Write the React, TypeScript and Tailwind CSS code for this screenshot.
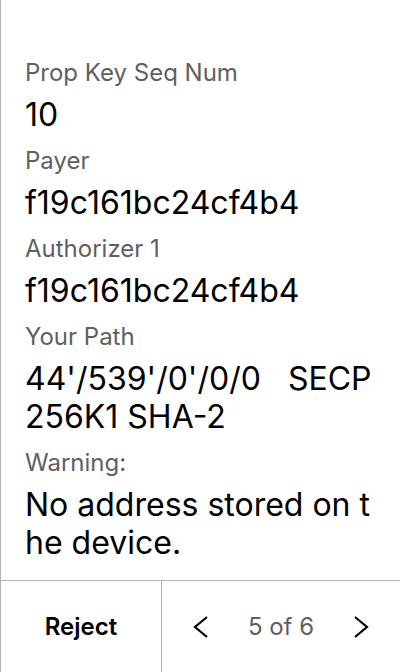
interface Field {
  label: string;
  value: string;
}

const fields: Field[] = [
  { label: 'Prop Key Seq Num', value: '10' },
  { label: 'Payer', value: 'f19c161bc24cf4b4' },
  { label: 'Authorizer 1', value: 'f19c161bc24cf4b4' },
  { label: 'Your Path', value: "44'/539'/0'/0/0   SECP256K1 SHA-2" },
  { label: 'Warning:', value: 'No address stored on the device.' },
];

const Chevron = ({ dir }: { dir: 'left' | 'right' }) => (
  <svg width="16" height="22" viewBox="0 0 16 22" fill="none" stroke="currentColor" strokeWidth="2.2">
    {dir === 'left' ? <polyline points="14,1 2,11 14,21" /> : <polyline points="2,1 14,11 2,21" />}
  </svg>
);

const App = () => {
  return (
    <div
      className="flex h-[672px] w-[400px] flex-col border-l border-[#b3b3b3] bg-white text-black"
      style={{ fontFamily: 'Inter, "Noto Sans", sans-serif' }}
    >
      <div className="flex flex-1 flex-col gap-[11px] overflow-hidden px-6 pt-[57px]">
        {fields.map((f) => (
          <div key={f.label} className="flex flex-col">
            <div className="mb-[7px] text-[24px] leading-[32px] text-[#5f5f5f]">{f.label}</div>
            <div className="whitespace-pre-wrap break-all text-[32px] leading-[38px]">{f.value}</div>
          </div>
        ))}
      </div>
      <div className="flex h-[92px] border-t border-[#b3b3b3]">
        <button className="flex w-[160px] items-center justify-center text-[24px] font-semibold">
          Reject
        </button>
        <div className="flex flex-1 items-center justify-between border-l border-[#b3b3b3] px-[31px]">
          <Chevron dir="left" />
          <span className="text-[24px] text-[#5f5f5f]">5 of 6</span>
          <Chevron dir="right" />
        </div>
      </div>
    </div>
  );
};

export default App;
